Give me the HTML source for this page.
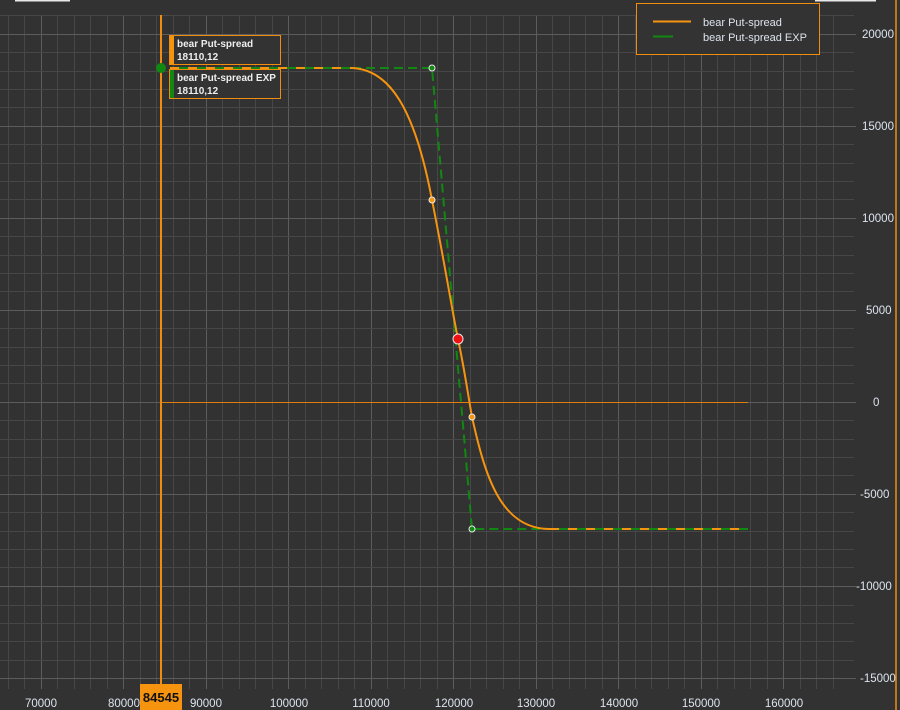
<!DOCTYPE html>
<html><head><style>
html,body{margin:0;padding:0;background:#323232;}
svg{display:block;font-family:"Liberation Sans",sans-serif;}
</style></head><body>
<svg width="900" height="710" xmlns="http://www.w3.org/2000/svg">
<rect width="900" height="710" fill="#323232"/>
<rect x="15" y="0" width="55" height="1.5" fill="#e8e8e8"/>
<rect x="815" y="0" width="61" height="1.5" fill="#e8e8e8"/>
<g stroke-width="1" shape-rendering="crispEdges">
<g stroke="#474747">
<line x1="8.5" y1="15" x2="8.5" y2="689"/><line x1="24.5" y1="15" x2="24.5" y2="689"/><line x1="57.5" y1="15" x2="57.5" y2="689"/><line x1="74.5" y1="15" x2="74.5" y2="689"/><line x1="90.5" y1="15" x2="90.5" y2="689"/><line x1="107.5" y1="15" x2="107.5" y2="689"/><line x1="140.5" y1="15" x2="140.5" y2="689"/><line x1="156.5" y1="15" x2="156.5" y2="689"/><line x1="173.5" y1="15" x2="173.5" y2="689"/><line x1="189.5" y1="15" x2="189.5" y2="689"/><line x1="222.5" y1="15" x2="222.5" y2="689"/><line x1="239.5" y1="15" x2="239.5" y2="689"/><line x1="255.5" y1="15" x2="255.5" y2="689"/><line x1="272.5" y1="15" x2="272.5" y2="689"/><line x1="305.5" y1="15" x2="305.5" y2="689"/><line x1="321.5" y1="15" x2="321.5" y2="689"/><line x1="338.5" y1="15" x2="338.5" y2="689"/><line x1="354.5" y1="15" x2="354.5" y2="689"/><line x1="387.5" y1="15" x2="387.5" y2="689"/><line x1="404.5" y1="15" x2="404.5" y2="689"/><line x1="420.5" y1="15" x2="420.5" y2="689"/><line x1="437.5" y1="15" x2="437.5" y2="689"/><line x1="470.5" y1="15" x2="470.5" y2="689"/><line x1="486.5" y1="15" x2="486.5" y2="689"/><line x1="503.5" y1="15" x2="503.5" y2="689"/><line x1="519.5" y1="15" x2="519.5" y2="689"/><line x1="552.5" y1="15" x2="552.5" y2="689"/><line x1="569.5" y1="15" x2="569.5" y2="689"/><line x1="585.5" y1="15" x2="585.5" y2="689"/><line x1="602.5" y1="15" x2="602.5" y2="689"/><line x1="635.5" y1="15" x2="635.5" y2="689"/><line x1="651.5" y1="15" x2="651.5" y2="689"/><line x1="668.5" y1="15" x2="668.5" y2="689"/><line x1="684.5" y1="15" x2="684.5" y2="689"/><line x1="717.5" y1="15" x2="717.5" y2="689"/><line x1="734.5" y1="15" x2="734.5" y2="689"/><line x1="750.5" y1="15" x2="750.5" y2="689"/><line x1="767.5" y1="15" x2="767.5" y2="689"/><line x1="800.5" y1="15" x2="800.5" y2="689"/><line x1="816.5" y1="15" x2="816.5" y2="689"/><line x1="833.5" y1="15" x2="833.5" y2="689"/>
</g>
<g stroke="#5c5c5c">
<line x1="41.5" y1="15" x2="41.5" y2="689"/><line x1="123.5" y1="15" x2="123.5" y2="689"/><line x1="206.5" y1="15" x2="206.5" y2="689"/><line x1="288.5" y1="15" x2="288.5" y2="689"/><line x1="371.5" y1="15" x2="371.5" y2="689"/><line x1="453.5" y1="15" x2="453.5" y2="689"/><line x1="536.5" y1="15" x2="536.5" y2="689"/><line x1="618.5" y1="15" x2="618.5" y2="689"/><line x1="701.5" y1="15" x2="701.5" y2="689"/><line x1="783.5" y1="15" x2="783.5" y2="689"/>
</g>
</g>
<g stroke="#474747" shape-rendering="crispEdges">
<line x1="0" x2="854" y1="15.5" y2="15.5"/><line x1="0" x2="854" y1="52.5" y2="52.5"/><line x1="0" x2="854" y1="71.5" y2="71.5"/><line x1="0" x2="854" y1="89.5" y2="89.5"/><line x1="0" x2="854" y1="107.5" y2="107.5"/><line x1="0" x2="854" y1="144.5" y2="144.5"/><line x1="0" x2="854" y1="163.5" y2="163.5"/><line x1="0" x2="854" y1="181.5" y2="181.5"/><line x1="0" x2="854" y1="199.5" y2="199.5"/><line x1="0" x2="854" y1="236.5" y2="236.5"/><line x1="0" x2="854" y1="255.5" y2="255.5"/><line x1="0" x2="854" y1="273.5" y2="273.5"/><line x1="0" x2="854" y1="291.5" y2="291.5"/><line x1="0" x2="854" y1="328.5" y2="328.5"/><line x1="0" x2="854" y1="347.5" y2="347.5"/><line x1="0" x2="854" y1="365.5" y2="365.5"/><line x1="0" x2="854" y1="383.5" y2="383.5"/><line x1="0" x2="854" y1="420.5" y2="420.5"/><line x1="0" x2="854" y1="439.5" y2="439.5"/><line x1="0" x2="854" y1="457.5" y2="457.5"/><line x1="0" x2="854" y1="475.5" y2="475.5"/><line x1="0" x2="854" y1="512.5" y2="512.5"/><line x1="0" x2="854" y1="531.5" y2="531.5"/><line x1="0" x2="854" y1="549.5" y2="549.5"/><line x1="0" x2="854" y1="567.5" y2="567.5"/><line x1="0" x2="854" y1="605.5" y2="605.5"/><line x1="0" x2="854" y1="623.5" y2="623.5"/><line x1="0" x2="854" y1="641.5" y2="641.5"/><line x1="0" x2="854" y1="660.5" y2="660.5"/>
</g>
<g stroke="#5c5c5c" shape-rendering="crispEdges">
<line x1="0" x2="856" y1="34.5" y2="34.5"/><line x1="0" x2="856" y1="126.5" y2="126.5"/><line x1="0" x2="856" y1="218.5" y2="218.5"/><line x1="0" x2="856" y1="310.5" y2="310.5"/><line x1="0" x2="856" y1="402.5" y2="402.5"/><line x1="0" x2="856" y1="494.5" y2="494.5"/><line x1="0" x2="856" y1="586.5" y2="586.5"/><line x1="0" x2="856" y1="678.5" y2="678.5"/>
</g>
<line x1="896" y1="0" x2="896" y2="710" stroke="#f28c0f" stroke-width="1.5"/>
<g fill="#dde4ee" font-size="11.5">
<text x="862" y="38">20000</text><text x="862" y="130">15000</text><text x="862" y="222">10000</text><text x="866" y="314">5000</text><text x="873" y="406">0</text><text x="860" y="498">-5000</text><text x="856" y="590">-10000</text><text x="860" y="682">-15000</text>
<g text-anchor="middle"><text x="41" y="707">70000</text><text x="124" y="707">80000</text><text x="206" y="707">90000</text><text x="289" y="707">100000</text><text x="371" y="707">110000</text><text x="454" y="707">120000</text><text x="536" y="707">130000</text><text x="619" y="707">140000</text><text x="701" y="707">150000</text><text x="784" y="707">160000</text></g>
</g>
<line x1="160" y1="402.5" x2="748" y2="402.5" stroke="#e07d0c" stroke-width="1"/>
<line x1="161" y1="15" x2="161" y2="688" stroke="#f28c0f" stroke-width="2"/>
<path d="M170 68 L432 68 L472 529 L748 529" fill="none" stroke="#118811" stroke-width="2" stroke-dasharray="9 5"/>
<path d="M170 68 L350 68 C390 68 415 110 432 200 C445 265 452 310 458 339 C465 372 468 395 472 417 C485 475 500 529 550 529 L748 529" fill="none" stroke="#f7940f" stroke-width="2"/>
<path d="M170 68 L350 68 M550 529 L748 529" fill="none" stroke="#118811" stroke-width="2" stroke-dasharray="9 9" stroke-dashoffset="-9"/>
<circle cx="432" cy="200" r="3" fill="#f7940f" stroke="#e8e8e8" stroke-width="1"/>
<circle cx="472" cy="417" r="3" fill="#f7940f" stroke="#e8e8e8" stroke-width="1"/>
<circle cx="432" cy="68" r="3" fill="#118811" stroke="#e8e8e8" stroke-width="1"/>
<circle cx="472" cy="529" r="3" fill="#118811" stroke="#e8e8e8" stroke-width="1"/>
<circle cx="458" cy="339" r="5" fill="#ee1111" stroke="#e8e8e8" stroke-width="1"/>
<circle cx="161" cy="68" r="5" fill="#118811"/>
<rect x="169.5" y="35.5" width="111" height="29" fill="#333" stroke="#f28c0f"/>
<rect x="170" y="36" width="4" height="28" fill="#f7940f"/>
<text x="177" y="47" fill="#eee" font-size="10" font-weight="bold">bear Put-spread</text>
<text x="177" y="60" fill="#eee" font-size="10" font-weight="bold">18110,12</text>
<rect x="169.5" y="69.5" width="111" height="29" fill="#333" stroke="#f28c0f"/>
<rect x="170" y="70" width="4" height="28" fill="#118811"/>
<text x="177" y="81" fill="#eee" font-size="10" font-weight="bold">bear Put-spread EXP</text>
<text x="177" y="94" fill="#eee" font-size="10" font-weight="bold">18110,12</text>
<rect x="636.5" y="3.5" width="183" height="51" fill="#333" stroke="#f28c0f"/>
<line x1="653" y1="21.5" x2="691" y2="21.5" stroke="#f7940f" stroke-width="2"/>
<line x1="653" y1="36.5" x2="673" y2="36.5" stroke="#118811" stroke-width="2"/>
<text x="703" y="26" fill="#dde4ee" font-size="11">bear Put-spread</text>
<text x="703" y="41" fill="#dde4ee" font-size="11">bear Put-spread EXP</text>
<rect x="140" y="684" width="42" height="26" fill="#f7940f"/>
<text x="161" y="702" text-anchor="middle" fill="#111" font-size="13" font-weight="bold">84545</text>
</svg>
</body></html>
